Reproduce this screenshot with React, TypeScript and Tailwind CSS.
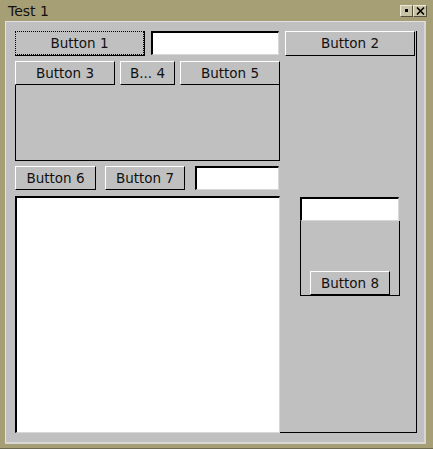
function Btn({ label, className = "" }: { label: string; className?: string }) {
  return (
    <div
      className={`flex items-center justify-center pt-px bg-[#c0c0c0] border border-t-white border-l-white border-r-black border-b-black text-[13.5px] leading-none text-[#111] whitespace-nowrap ${className}`}
    >
      {label}
    </div>
  );
}

function Entry({ className = "" }: { className?: string }) {
  return (
    <div
      className={`bg-white border-t-2 border-l-2 border-r border-b border-t-black border-l-black border-r-[#d8d8d8] border-b-[#d8d8d8] ${className}`}
    />
  );
}

export default function App() {
  return (
    <div className="w-[433px] h-[449px] bg-[#a69e74] flex flex-col font-['DejaVu_Sans',sans-serif] border-b border-b-[#6e6a50]">
      {/* title bar */}
      <div className="h-[21px] flex items-center justify-between pl-[8px] pr-[6px]">
        <span className="text-[14px] leading-none text-[#111]">Test 1</span>
        <div className="flex">
          <div className="w-[13px] h-[12px] bg-[#c9c3a6] border border-t-[#ece8d6] border-l-[#ece8d6] border-r-[#55513c] border-b-[#55513c] flex items-center justify-center">
            <div className="w-[3px] h-[3px] bg-black" />
          </div>
          <div className="w-[14px] h-[12px] bg-[#c9c3a6] border border-t-[#ece8d6] border-l-[#ece8d6] border-r-[#55513c] border-b-[#55513c] flex items-center justify-center">
            <svg width="9" height="8" viewBox="0 0 9 8">
              <path d="M1 0.5 L8 7.5 M8 0.5 L1 7.5" stroke="black" strokeWidth="1.6" />
            </svg>
          </div>
        </div>
      </div>

      {/* client area */}
      <div className="ml-[5px] mr-[7px] mb-[4px] flex-1 bg-[#c0c0c0] border-t border-l border-t-[#e2e2e2] border-l-[#e2e2e2] border-r-2 border-b-2 border-r-[#d6d6d6] border-b-[#d6d6d6] pl-[9px] pt-[9px] flex items-start">
        {/* left column */}
        <div className="w-[265px] flex flex-col">
          <div className="h-[25px] flex items-start">
            <div className="w-[130px] h-[25px] border-r border-b border-black">
              <div className="w-full h-full flex items-center justify-center pt-px bg-[#c0c0c0] border border-dotted border-black text-[13.5px] leading-none text-[#111]">
                Button 1
              </div>
            </div>
            <Entry className="ml-[6px] w-[128px] h-[24px]" />
          </div>

          <div className="mt-[5px] h-[100px] flex flex-col">
            <div className="h-[24px] flex gap-[5px]">
              <Btn label="Button 3" className="w-[100px]" />
              <Btn label="B... 4" className="w-[55px]" />
              <Btn label="Button 5" className="w-[100px]" />
            </div>
            <div className="flex-1 border-l border-r border-b border-black" />
          </div>

          <div className="mt-[5px] h-[25px] flex items-start">
            <Btn label="Button 6" className="w-[81px] h-[24px]" />
            <Btn label="Button 7" className="ml-[9px] w-[80px] h-[24px]" />
            <Entry className="ml-[10px] w-[84px] h-[24px]" />
          </div>

          <Entry className="mt-[5px] w-[265px] h-[237px]" />
        </div>

        {/* right column */}
        <div className="w-[137px] h-[402px] pl-[5px] border-r border-b border-black flex flex-col">
          <Btn label="Button 2" className="w-[130px] h-[25px]" />
          <div className="mt-[141px] ml-[15px] flex flex-col">
            <Entry className="w-[99px] h-[24px]" />
            <div className="w-[100px] h-[75px] border-l border-r border-b border-black flex flex-col justify-end items-center">
              <Btn label="Button 8" className="w-[80px] h-[24px]" />
            </div>
          </div>
        </div>
      </div>
    </div>
  );
}
